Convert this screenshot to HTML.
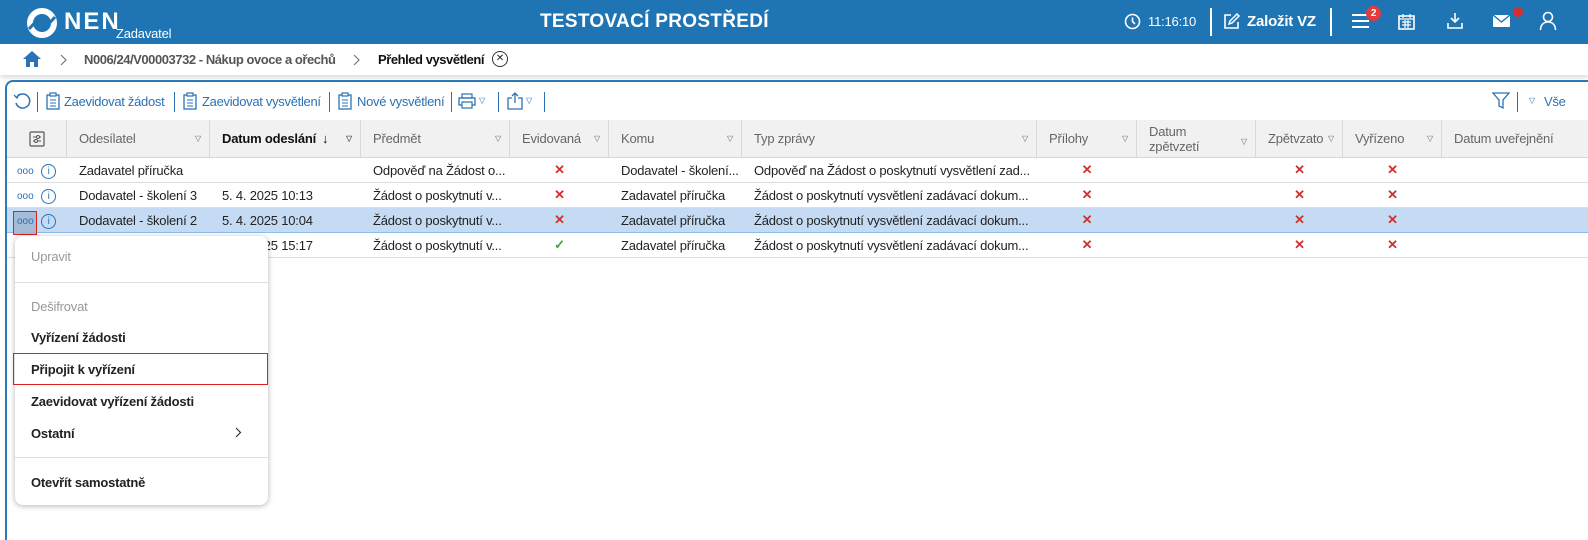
<!DOCTYPE html>
<html><head><meta charset="utf-8">
<style>
*{box-sizing:border-box;margin:0;padding:0}
body{width:1588px;height:522px;overflow:hidden;background:#fff;font-family:"Liberation Sans",sans-serif;font-size:13px;color:#222;position:relative;letter-spacing:-0.2px}
.abs{position:absolute}
#hdr{position:absolute;left:0;top:0;width:1588px;height:44px;background:#1f74b3;color:#fff}
#bc{position:absolute;left:0;top:44px;width:1588px;height:31px;background:#fff;box-shadow:0 3px 4px rgba(0,0,0,.12)}
#panel{position:absolute;left:5px;top:80px;width:1600px;height:460px;border-left:2px solid #2c79b8;border-top:2px solid #2c79b8;border-top-left-radius:8px}
.tb{color:#2a72b5;font-size:13px;top:94px;white-space:nowrap;letter-spacing:-0.3px}
.sep{position:absolute;width:1px;height:20px;background:#2a72b5;top:92px}
.row{position:absolute;left:7px;width:1581px;height:25px;border-bottom:1px solid #ddd;display:flex;align-items:center}
.row div{flex:none;padding-left:12px;white-space:nowrap;overflow:hidden;text-overflow:ellipsis}
.hrow{position:absolute;left:7px;top:120px;width:1581px;height:38px;background:#f1f1f1;border-bottom:1px solid #d6d6d6;display:flex;color:#666}
.hrow div{flex:none;border-right:1px solid #d9d9d9;padding:0 0 0 12px;display:flex;align-items:center;position:relative}
.tri{position:absolute;right:8px;top:14px;font-size:8px;color:#666}
.x{color:#d0312d;font-weight:bold;text-align:center;padding-left:0!important;font-size:13px}
.menu{position:absolute;left:15px;top:236px;width:253px;height:269px;background:#fff;border-radius:8px;box-shadow:0 1px 6px rgba(0,0,0,.3)}
.mi{position:absolute;left:16px;font-size:13px;color:#222}
.dots{color:#2a72b5;font-size:10px;letter-spacing:0}
.info{display:inline-block;width:15px;height:15px;border:1.3px solid #2a72b5;border-radius:50%;font-size:10px;text-align:center;line-height:13px;color:#2a72b5}
</style></head><body>
<div id="hdr">
 <svg class="abs" style="left:26px;top:7px" width="32" height="32" viewBox="0 0 32 32"><circle cx="16" cy="16" r="12" fill="none" stroke="#fff" stroke-width="6"/><path d="M3 22 L14 10" stroke="#1f74b3" stroke-width="3"/><path d="M18 22 L29 10" stroke="#1f74b3" stroke-width="3"/></svg>
 <div class="abs" style="left:64px;top:8px;font-size:24px;font-weight:bold;letter-spacing:2px">NEN</div>
 <div class="abs" style="left:116px;top:26px;font-size:13px">Zadavatel</div>
 <div class="abs" style="left:540px;top:11px;font-size:19px;font-weight:bold;letter-spacing:.3px">TESTOVACÍ PROSTŘEDÍ</div>
 <svg class="abs" style="left:1124px;top:13px" width="17" height="17" viewBox="0 0 17 17"><circle cx="8.5" cy="8.5" r="7" fill="none" stroke="#fff" stroke-width="1.6"/><path d="M8.5 4.5v4l2.5 2.5" fill="none" stroke="#fff" stroke-width="1.6"/></svg>
 <div class="abs" style="left:1148px;top:14px;font-size:13px">11:16:10</div>
 <div class="abs" style="left:1210px;top:8px;width:2px;height:28px;background:#fff"></div>
 <svg class="abs" style="left:1222px;top:12px" width="19" height="19" viewBox="0 0 19 19"><path d="M9 3H3v13h13v-6" fill="none" stroke="#fff" stroke-width="1.6"/><path d="M7 12l1-3 7-7 2 2-7 7z" fill="none" stroke="#fff" stroke-width="1.5"/></svg>
 <div class="abs" style="left:1247px;top:13px;font-size:15px;font-weight:bold">Založit VZ</div>
 <div class="abs" style="left:1330px;top:8px;width:2px;height:28px;background:#fff"></div>
 <div class="abs" style="left:1352px;top:14px;width:17px;height:2px;background:#fff;box-shadow:0 6px 0 #fff,0 12px 0 #fff"></div>
 <div class="abs" style="left:1366px;top:6px;width:15px;height:15px;border-radius:50%;background:#e23b3b;font-size:10px;font-weight:bold;text-align:center;line-height:15px">2</div>
 <svg class="abs" style="left:1398px;top:13px" width="17" height="17" viewBox="0 0 17 17"><rect x="1" y="3" width="15" height="13" fill="none" stroke="#fff" stroke-width="1.6"/><path d="M1 6h15M5 1v4M12 1v4M4 9h9M4 12h9M7 7v8M10 7v8" stroke="#fff" stroke-width="1.2"/></svg>
 <svg class="abs" style="left:1446px;top:12px" width="18" height="18" viewBox="0 0 18 18"><path d="M9 1v9M5 6l4 4 4-4M2 11v5h14v-5" fill="none" stroke="#fff" stroke-width="1.6"/></svg>
 <div class="abs" style="left:1493px;top:15px;width:17px;height:12px;background:#fff;border-radius:1px"></div>
 <svg class="abs" style="left:1493px;top:15px" width="17" height="12"><path d="M0 0l8.5 7L17 0" fill="none" stroke="#1f74b3" stroke-width="1.4"/></svg>
 <div class="abs" style="left:1513px;top:7px;width:10px;height:10px;border-radius:50%;background:#d32f2f"></div>
 <svg class="abs" style="left:1539px;top:11px" width="18" height="20" viewBox="0 0 18 20"><circle cx="9" cy="6" r="4.5" fill="none" stroke="#fff" stroke-width="1.6"/><path d="M1.5 19c0-5 3-8 7.5-8s7.5 3 7.5 8" fill="none" stroke="#fff" stroke-width="1.6"/></svg>
</div>
<div id="bc">
 <svg class="abs" style="left:22px;top:6px" width="20" height="18" viewBox="0 0 20 18"><path d="M10 1L1 9h3v8h4v-5h4v5h4V9h3z" fill="#2a72b5"/></svg>
 <svg class="abs" style="left:60px;top:10px" width="8" height="12"><path d="M1 1l5 5-5 5" fill="none" stroke="#777" stroke-width="1.2"/></svg>
 <div class="abs" style="left:84px;top:8px;color:#555;font-size:13px;font-weight:bold;letter-spacing:-0.45px">N006/24/V00003732 - Nákup ovoce a ořechů</div>
 <svg class="abs" style="left:353px;top:10px" width="8" height="12"><path d="M1 1l5 5-5 5" fill="none" stroke="#777" stroke-width="1.2"/></svg>
 <div class="abs" style="left:378px;top:8px;color:#111;font-size:13px;font-weight:bold;letter-spacing:-0.45px">Přehled vysvětlení</div>
 <div class="abs" style="left:492px;top:7px;width:16px;height:16px;border:1.3px solid #333;border-radius:50%;font-size:10px;text-align:center;line-height:13px">✕</div>
</div>
<div id="panel"></div>
<svg class="abs" style="left:13px;top:92px" width="18" height="18" viewBox="0 0 18 18"><path d="M4 5A7 7 0 1 1 3 11" fill="none" stroke="#2a72b5" stroke-width="1.5"/><path d="M1 3l3 3 2-4" fill="none" stroke="#2a72b5" stroke-width="1.3"/></svg>
<div class="sep" style="left:37px"></div>
<svg class="abs" style="left:46px;top:92px" width="14" height="18" viewBox="0 0 14 18"><rect x="1" y="3" width="12" height="14" fill="none" stroke="#2a72b5" stroke-width="1.3"/><rect x="4" y="1" width="6" height="3" fill="#fff" stroke="#2a72b5" stroke-width="1.2"/><path d="M4 8h6M4 11h6M4 14h6" stroke="#2a72b5"/></svg>
<div class="abs tb" style="left:64px">Zaevidovat žádost</div>
<div class="sep" style="left:174px"></div>
<svg class="abs" style="left:183px;top:92px" width="14" height="18" viewBox="0 0 14 18"><rect x="1" y="3" width="12" height="14" fill="none" stroke="#2a72b5" stroke-width="1.3"/><rect x="4" y="1" width="6" height="3" fill="#fff" stroke="#2a72b5" stroke-width="1.2"/><path d="M4 8h6M4 11h6M4 14h6" stroke="#2a72b5"/></svg>
<div class="abs tb" style="left:202px">Zaevidovat vysvětlení</div>
<div class="sep" style="left:329px"></div>
<svg class="abs" style="left:338px;top:92px" width="14" height="18" viewBox="0 0 14 18"><rect x="1" y="3" width="12" height="14" fill="none" stroke="#2a72b5" stroke-width="1.3"/><rect x="4" y="1" width="6" height="3" fill="#fff" stroke="#2a72b5" stroke-width="1.2"/><path d="M4 8h6M4 11h6M4 14h6" stroke="#2a72b5"/></svg>
<div class="abs tb" style="left:357px">Nové vysvětlení</div>
<div class="sep" style="left:451px"></div>
<svg class="abs" style="left:458px;top:93px" width="18" height="16" viewBox="0 0 18 16"><rect x="1" y="5" width="16" height="7" fill="none" stroke="#2a72b5" stroke-width="1.3"/><rect x="4" y="1" width="10" height="4" fill="none" stroke="#2a72b5" stroke-width="1.2"/><rect x="4" y="9" width="10" height="6" fill="#fff" stroke="#2a72b5" stroke-width="1.2"/></svg>
<div class="abs tb" style="left:479px;top:96px;font-size:8px">▽</div>
<div class="sep" style="left:498px"></div>
<svg class="abs" style="left:507px;top:92px" width="16" height="18" viewBox="0 0 16 18"><path d="M5 6H1v11h14V6h-4M8 11V1M5 4l3-3 3 3" fill="none" stroke="#2a72b5" stroke-width="1.3"/></svg>
<div class="abs tb" style="left:526px;top:96px;font-size:8px">▽</div>
<div class="sep" style="left:544px"></div>
<svg class="abs" style="left:1492px;top:92px" width="18" height="18" viewBox="0 0 18 18"><path d="M1 1h16l-6 7v8l-4-2V8z" fill="none" stroke="#2a72b5" stroke-width="1.3"/></svg>
<div class="sep" style="left:1517px"></div>
<div class="abs tb" style="left:1529px;top:96px;font-size:8px">▽</div>
<div class="abs tb" style="left:1544px">Vše</div>

<div class="hrow">
 <div style="width:60px;justify-content:center;padding:0"><svg width="16" height="16" viewBox="0 0 16 16"><rect x="1" y="1" width="14" height="14" rx="1" fill="none" stroke="#555" stroke-width="1.2"/><path d="M4 6h8M4 10h8" stroke="#555"/><circle cx="9" cy="6" r="1.5" fill="#fff" stroke="#555"/><circle cx="7" cy="10" r="1.5" fill="#fff" stroke="#555"/></svg></div>
 <div style="width:143px">Odesílatel<span class="tri">▽</span></div>
 <div style="width:151px;color:#111;font-weight:bold">Datum odeslání <span style="font-weight:normal;margin-left:6px">↓</span><span class="tri">▽</span></div>
 <div style="width:149px">Předmět<span class="tri">▽</span></div>
 <div style="width:99px">Evidovaná<span class="tri">▽</span></div>
 <div style="width:133px">Komu<span class="tri">▽</span></div>
 <div style="width:295px">Typ zprávy<span class="tri">▽</span></div>
 <div style="width:100px">Přílohy<span class="tri">▽</span></div>
 <div style="width:119px;line-height:15px">Datum<br>zpětvzetí<span class="tri">▽</span></div>
 <div style="width:87px">Zpětvzato<span class="tri">▽</span></div>
 <div style="width:99px">Vyřízeno<span class="tri">▽</span></div>
 <div style="width:146px;border:none">Datum uveřejnění</div>
</div>

<div class="row" style="top:158px">
 <div style="width:60px;padding-left:10px"><span class="dots">ooo</span> <span class="info" style="margin-left:4px">i</span></div>
 <div style="width:143px">Zadavatel příručka</div><div style="width:151px"></div>
 <div style="width:149px">Odpověď na Žádost o...</div><div class="x" style="width:99px">✕</div>
 <div style="width:133px">Dodavatel - školení...</div><div style="width:295px">Odpověď na Žádost o poskytnutí vysvětlení zad...</div>
 <div class="x" style="width:100px">✕</div><div style="width:119px"></div><div class="x" style="width:87px">✕</div><div class="x" style="width:99px">✕</div>
</div>
<div class="row" style="top:183px">
 <div style="width:60px;padding-left:10px"><span class="dots">ooo</span> <span class="info" style="margin-left:4px">i</span></div>
 <div style="width:143px">Dodavatel - školení 3</div><div style="width:151px">5. 4. 2025 10:13</div>
 <div style="width:149px">Žádost o poskytnutí v...</div><div class="x" style="width:99px">✕</div>
 <div style="width:133px">Zadavatel příručka</div><div style="width:295px">Žádost o poskytnutí vysvětlení zadávací dokum...</div>
 <div class="x" style="width:100px">✕</div><div style="width:119px"></div><div class="x" style="width:87px">✕</div><div class="x" style="width:99px">✕</div>
</div>
<div class="row" style="top:208px;background:#c5dbf4;border-bottom:1px solid #8cbcea">
 <div style="width:60px;padding-left:10px;position:relative;overflow:visible"><span style="position:absolute;left:6px;top:-1px;width:24px;height:24px;background:#a4bcd6;border:1px solid #e02020"></span><span class="dots" style="position:relative">ooo</span> <span class="info" style="position:relative;margin-left:4px">i</span></div>
 <div style="width:143px">Dodavatel - školení 2</div><div style="width:151px">5. 4. 2025 10:04</div>
 <div style="width:149px">Žádost o poskytnutí v...</div><div class="x" style="width:99px">✕</div>
 <div style="width:133px">Zadavatel příručka</div><div style="width:295px">Žádost o poskytnutí vysvětlení zadávací dokum...</div>
 <div class="x" style="width:100px">✕</div><div style="width:119px"></div><div class="x" style="width:87px">✕</div><div class="x" style="width:99px">✕</div>
</div>
<div class="row" style="top:233px">
 <div style="width:60px"></div>
 <div style="width:143px"></div><div style="width:151px">5. 4. 2025 15:17</div>
 <div style="width:149px">Žádost o poskytnutí v...</div><div class="x" style="width:99px;color:#3aa53a">✓</div>
 <div style="width:133px">Zadavatel příručka</div><div style="width:295px">Žádost o poskytnutí vysvětlení zadávací dokum...</div>
 <div class="x" style="width:100px">✕</div><div style="width:119px"></div><div class="x" style="width:87px">✕</div><div class="x" style="width:99px">✕</div>
</div>

<div class="menu">
 <div class="mi" style="top:13px;color:#999">Upravit</div>
 <div class="abs" style="left:0;top:46px;width:253px;height:1px;background:#ddd"></div>
 <div class="mi" style="top:63px;color:#999">Dešifrovat</div>
 <div class="mi" style="top:94px;font-weight:bold">Vyřízení žádosti</div>
 <div class="abs" style="left:-2px;top:117px;width:255px;height:32px;border:1px solid #e02020"></div>
 <div class="mi" style="top:126px;font-weight:bold">Připojit k vyřízení</div>
 <div class="mi" style="top:158px;font-weight:bold">Zaevidovat vyřízení žádosti</div>
 <div class="mi" style="top:190px;font-weight:bold">Ostatní</div>
 <svg class="abs" style="left:220px;top:191px" width="7" height="11"><path d="M1 1l4.5 4.5L1 10" fill="none" stroke="#333" stroke-width="1.2"/></svg>
 <div class="abs" style="left:0;top:221px;width:253px;height:1px;background:#ddd"></div>
 <div class="mi" style="top:239px;font-weight:bold">Otevřít samostatně</div>
</div>
</body></html>
